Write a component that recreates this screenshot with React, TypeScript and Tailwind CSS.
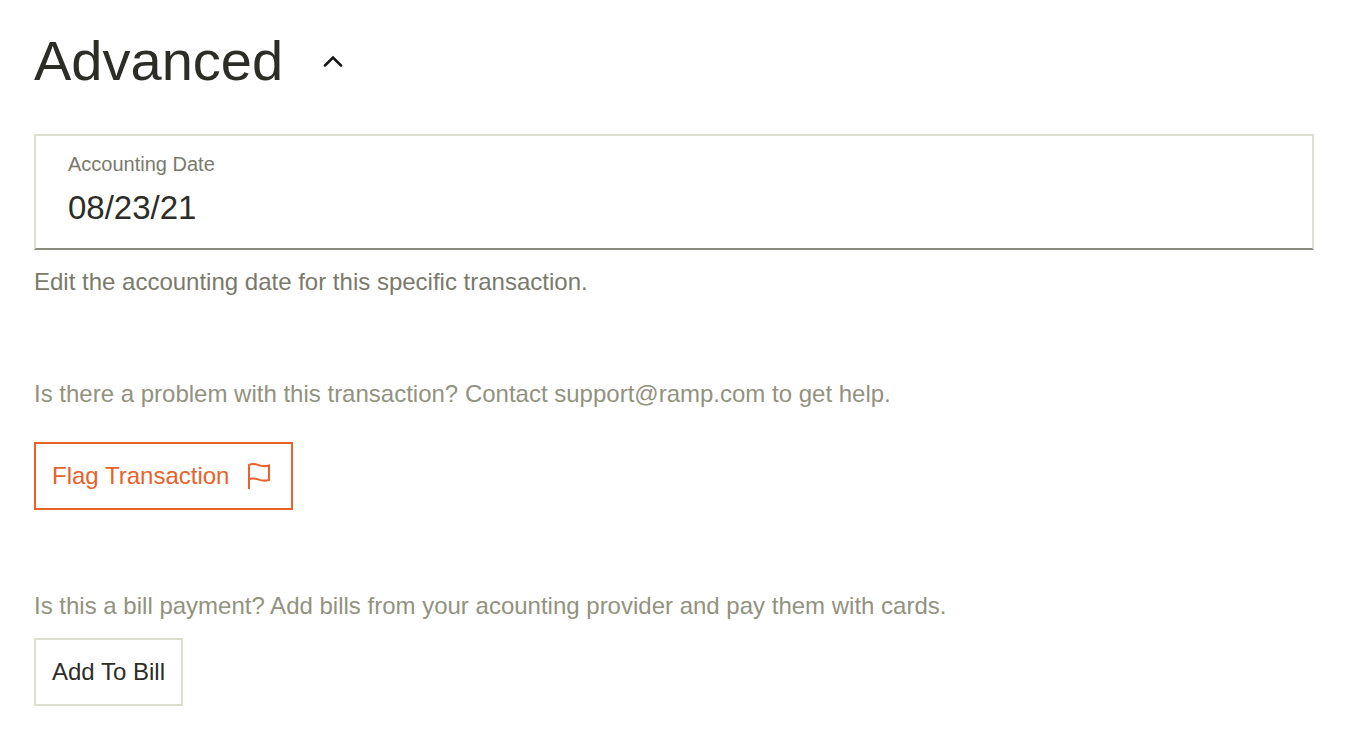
import React, { useState } from "react";

const FlagIcon = () => (
  <svg
    width="28"
    height="28"
    viewBox="0 0 28 28"
    fill="none"
    stroke="currentColor"
    strokeWidth="2"
    aria-hidden="true"
  >
    <path d="M2 27V3C4 1.800 7.500 1.700 11 2.900C15 4.300 18 4.700 22 3.500V18C18 19.200 15 18.800 11 17.400C7.500 16.200 4 16.200 2 17.200" />
  </svg>
);

const ChevronIcon = ({ open }: { open: boolean }) => (
  <svg
    width="20"
    height="12"
    viewBox="0 0 20 12"
    fill="none"
    stroke="currentColor"
    strokeWidth="2.5"
    strokeLinecap="round"
    className={open ? "" : "rotate-180"}
    aria-hidden="true"
  >
    <path d="M2 10.500L10 2.500L18 10.500" />
  </svg>
);

const App = () => {
  const [open, setOpen] = useState(true);
  const [date, setDate] = useState("08/23/21");

  return (
    <main className="bg-white px-[34px] pt-[29px] pb-8 font-['Liberation_Sans',Arial,sans-serif] text-2xl text-[#2d2d27]">
      <h1 className="flex items-center gap-10 text-[56px] leading-[64px]">
        Advanced
        <button
          type="button"
          aria-label="Toggle advanced"
          aria-expanded={open}
          onClick={() => setOpen(!open)}
          className="text-[#161616]"
        >
          <ChevronIcon open={open} />
        </button>
      </h1>
      {open && (
        <>
          <div className="mt-[41px] mr-3 border-2 border-[#dcdecf] border-b-[#8c8c7c] px-8 pt-3 pb-5">
            <label htmlFor="accounting-date" className="block text-xl leading-8 text-[#7a7a6c]">
              Accounting Date
            </label>
            <input
              id="accounting-date"
              value={date}
              onChange={(e) => setDate(e.target.value)}
              className="mt-2 block w-full text-[33px] leading-10 outline-none"
            />
          </div>
          <p className="mt-4 text-[#7a7a6c]">Edit the accounting date for this specific transaction.</p>
          <p className="mt-20 text-[#929280]">
            Is there a problem with this transaction? Contact support@ramp.com to get help.
          </p>
          <button
            type="button"
            className="mt-8 flex h-[68px] items-center gap-[18px] border-2 border-[#e8622c] px-4 text-[#e8622c]"
          >
            Flag Transaction
            <FlagIcon />
          </button>
          <p className="mt-20 text-[#929280]">
            Is this a bill payment? Add bills from your acounting provider and pay them with cards.
          </p>
          <button type="button" className="mt-4 h-[68px] border-2 border-[#dcdecf] px-4">
            Add To Bill
          </button>
        </>
      )}
    </main>
  );
};

export default App;
